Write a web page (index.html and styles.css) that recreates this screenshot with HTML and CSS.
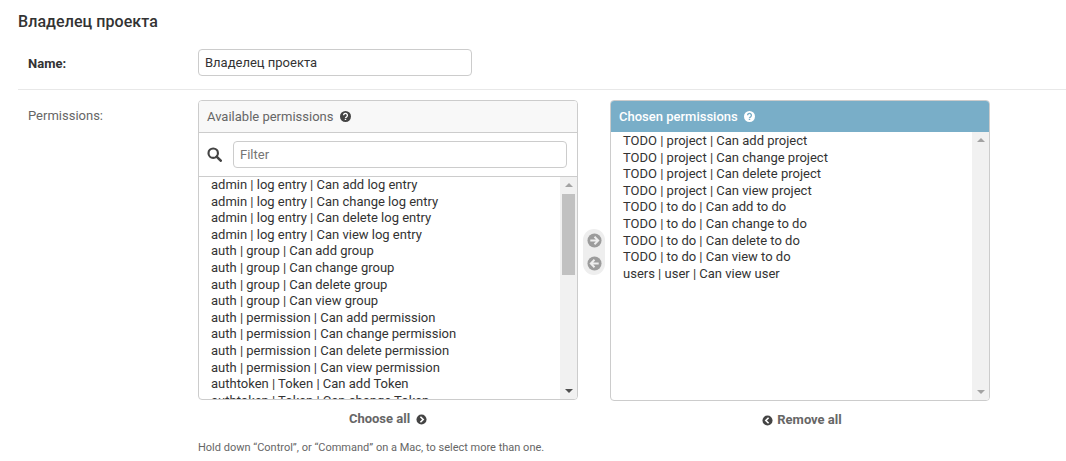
FILE: index.html
```html
<!DOCTYPE html>
<html lang="en">
<head>
<meta charset="utf-8">
<title>Владелец проекта</title>
<link rel="stylesheet" href="styles.css">
</head>
<body>
<main class="page">
  <h2 class="title">Владелец проекта</h2>
  <div class="row row-name">
    <label class="label label-strong">Name:</label>
    <input class="name-input" type="text" value="Владелец проекта">
  </div>
  <div class="row row-perms">
    <label class="label">Permissions:</label>
    <div class="field">
      <div class="selector">
        <div class="column">
          <div class="box">
            <div class="box-head">Available permissions
              <svg class="help" viewBox="0 0 12 12"><circle cx="6" cy="6" r="6" fill="#444"/><path d="M3.9 4.7a2.1 2.1 0 1 1 3.3 1.7c-.8.5-1.2.8-1.2 1.3" fill="none" stroke="#fff" stroke-width="1.5"/><path d="M5.2 8.4h1.6v1.5H5.2z" fill="#fff"/></svg>
            </div>
            <div class="filter">
              <svg class="search" viewBox="0 0 14 14"><circle cx="5.8" cy="5.8" r="4.4" fill="none" stroke="#444" stroke-width="2"/><path d="M9 9l3.8 3.8" stroke="#444" stroke-width="2.4" stroke-linecap="round"/></svg>
              <input class="filter-input" type="text" placeholder="Filter">
            </div>
            <div class="list-wrap list-wrap-left">
              <ul class="list">
                <li>admin | log entry | Can add log entry</li>
                <li>admin | log entry | Can change log entry</li>
                <li>admin | log entry | Can delete log entry</li>
                <li>admin | log entry | Can view log entry</li>
                <li>auth | group | Can add group</li>
                <li>auth | group | Can change group</li>
                <li>auth | group | Can delete group</li>
                <li>auth | group | Can view group</li>
                <li>auth | permission | Can add permission</li>
                <li>auth | permission | Can change permission</li>
                <li>auth | permission | Can delete permission</li>
                <li>auth | permission | Can view permission</li>
                <li>authtoken | Token | Can add Token</li>
                <li>authtoken | Token | Can change Token</li>
              </ul>
              <div class="scrollbar">
                <span class="arrow-up arrow-dark"></span>
                <span class="thumb"></span>
                <span class="arrow-down arrow-dark"></span>
              </div>
            </div>
          </div>
          <div class="action action-choose">Choose all
            <svg class="action-icon" viewBox="0 0 12 12"><circle cx="6" cy="6" r="5.5" fill="#444"/><path d="M4.8 3l3 3-3 3" fill="none" stroke="#fff" stroke-width="1.8"/></svg>
          </div>
        </div>
        <div class="movers">
          <svg class="mover" viewBox="0 0 16 16"><circle cx="8" cy="8" r="7.5" fill="#9c9c9c"/><path d="M3.5 8h8M8 4l4 4-4 4" fill="none" stroke="#eee" stroke-width="2"/></svg>
          <svg class="mover" viewBox="0 0 16 16"><circle cx="8" cy="8" r="7.5" fill="#9c9c9c"/><path d="M12.5 8h-8M8 4L4 8l4 4" fill="none" stroke="#eee" stroke-width="2"/></svg>
        </div>
        <div class="column">
          <div class="box">
            <div class="box-head box-head-chosen">Chosen permissions
              <svg class="help" viewBox="0 0 12 12"><circle cx="6" cy="6" r="6" fill="#fff"/><path d="M3.9 4.7a2.1 2.1 0 1 1 3.3 1.7c-.8.5-1.2.8-1.2 1.3" fill="none" stroke="#79aec8" stroke-width="1.5"/><path d="M5.2 8.4h1.6v1.5H5.2z" fill="#79aec8"/></svg>
            </div>
            <div class="list-wrap list-wrap-right">
              <ul class="list list-right">
                <li>TODO | project | Can add project</li>
                <li>TODO | project | Can change project</li>
                <li>TODO | project | Can delete project</li>
                <li>TODO | project | Can view project</li>
                <li>TODO | to do | Can add to do</li>
                <li>TODO | to do | Can change to do</li>
                <li>TODO | to do | Can delete to do</li>
                <li>TODO | to do | Can view to do</li>
                <li>users | user | Can view user</li>
              </ul>
              <div class="scrollbar">
                <span class="arrow-up"></span>
                <span class="track"></span>
                <span class="arrow-down"></span>
              </div>
            </div>
          </div>
          <div class="action action-remove">
            <svg class="action-icon" viewBox="0 0 12 12"><circle cx="6" cy="6" r="5.5" fill="#444"/><path d="M7.2 3l-3 3 3 3" fill="none" stroke="#fff" stroke-width="1.8"/></svg>
            Remove all
          </div>
        </div>
      </div>
      <p class="help-text">Hold down “Control”, or “Command” on a Mac, to select more than one.</p>
    </div>
  </div>
</main>
</body>
</html>
```

FILE: styles.css
```css
* { box-sizing: border-box; }
html, body { margin: 0; padding: 0; }
body {
  background: #fff;
  color: #333;
  font-family: Roboto, "Liberation Sans", sans-serif;
  font-size: 13px;
  height: 461px;
  overflow: hidden;
}
.page { padding: 13px 0 0 18px; }
.title {
  margin: 0;
  font-size: 16px;
  font-weight: 500;
  line-height: 18px;
  letter-spacing: 0.07px;
  color: #333;
}
.row {
  display: flex;
  padding-left: 10px;
}
.row-name {
  margin-top: 18px;
  padding-bottom: 13px;
  border-bottom: 1px solid #e8e8e8;
}
.row-perms { padding-top: 10px; }
.label {
  width: 170px;
  flex: none;
  color: #666;
  line-height: 16px;
  padding-top: 7px;
}
.row-perms .label { padding-top: 8px; }
.label-strong {
  color: #333;
  font-weight: 700;
  padding-top: 7px;
}
.name-input {
  width: 274px;
  height: 27px;
  border: 1px solid #ccc;
  border-radius: 4px;
  padding: 0 6px;
  font: 13px Roboto, sans-serif;
  color: #333;
  background: #fff;
}
.selector {
  display: flex;
  align-items: flex-start;
}
.column { width: 380px; flex: none; }
.box {
  border: 1px solid #ccc;
  border-radius: 4px;
  overflow: hidden;
}
.box-head {
  display: flex;
  align-items: center;
  gap: 7px;
  height: 32px;
  padding-left: 8px;
  background: #f8f8f8;
  border-bottom: 1px solid #ccc;
  color: #666;
  font-size: 13px;
}
.box-head-chosen {
  height: 31px;
  gap: 6px;
  background: #79aec8;
  border-bottom: 0;
  color: #fff;
  font-weight: 500;
}
.help { width: 11px; height: 11px; flex: none; }
.filter {
  display: flex;
  align-items: center;
  height: 44px;
  padding: 0 10px 0 8px;
  border-bottom: 1px solid #ccc;
}
.search { width: 15px; height: 15px; flex: none; margin-right: 11px; }
.filter-input {
  flex: 1;
  min-width: 0;
  height: 27px;
  border: 1px solid #ccc;
  border-radius: 4px;
  padding: 0 6px;
  font: 13px Roboto, sans-serif;
  color: #333;
}
.filter-input::placeholder { color: #757575; opacity: 1; }
.list-wrap { display: flex; overflow: hidden; }
.list-wrap-left { height: 222px; }
.list-wrap-right { height: 268px; }
.list {
  flex: 1;
  min-width: 0;
  margin: 0;
  padding: 0 0 0 12px;
  list-style: none;
  line-height: 16.6px;
  color: #333;
}
.list-right { padding-top: 1px; }
.scrollbar {
  width: 17px;
  flex: none;
  display: flex;
  flex-direction: column;
  align-items: center;
  background: #f1f1f1;
}
.arrow-up, .arrow-down {
  flex: none;
  width: 0;
  height: 0;
  margin: 6px 0;
  border-left: 4px solid transparent;
  border-right: 4px solid transparent;
}
.arrow-up { border-bottom: 4px solid #a3a3a3; }
.arrow-down { border-top: 4px solid #a3a3a3; margin-top: auto; }
.arrow-down.arrow-dark { border-top-color: #505050; }
.thumb {
  width: 13px;
  height: 81px;
  background: #c1c1c1;
  margin-top: 1px;
}
.track { flex: 1; }
.action {
  display: flex;
  align-items: center;
  justify-content: center;
  gap: 6px;
  height: 37px;
  font-weight: 700;
  color: #666;
  font-size: 13px;
}
.action-icon { width: 11px; height: 11px; flex: none; }
.action-choose .action-icon { margin-top: 2px; }
.action-remove { padding-left: 4px; }
.action-remove .action-icon { margin-top: 2px; margin-right: -2px; }
.movers {
  width: 22px;
  margin: 129px 5px 0;
  height: 46px;
  padding: 4px 0;
  flex: none;
  display: flex;
  flex-direction: column;
  align-items: center;
  justify-content: space-between;
  background: #eee;
  border-radius: 11px;
}
.mover { width: 15px; height: 15px; }
.help-text {
  margin: 0;
  padding-top: 3px;
  font-size: 11px;
  line-height: 14px;
  color: #666;
}
```
